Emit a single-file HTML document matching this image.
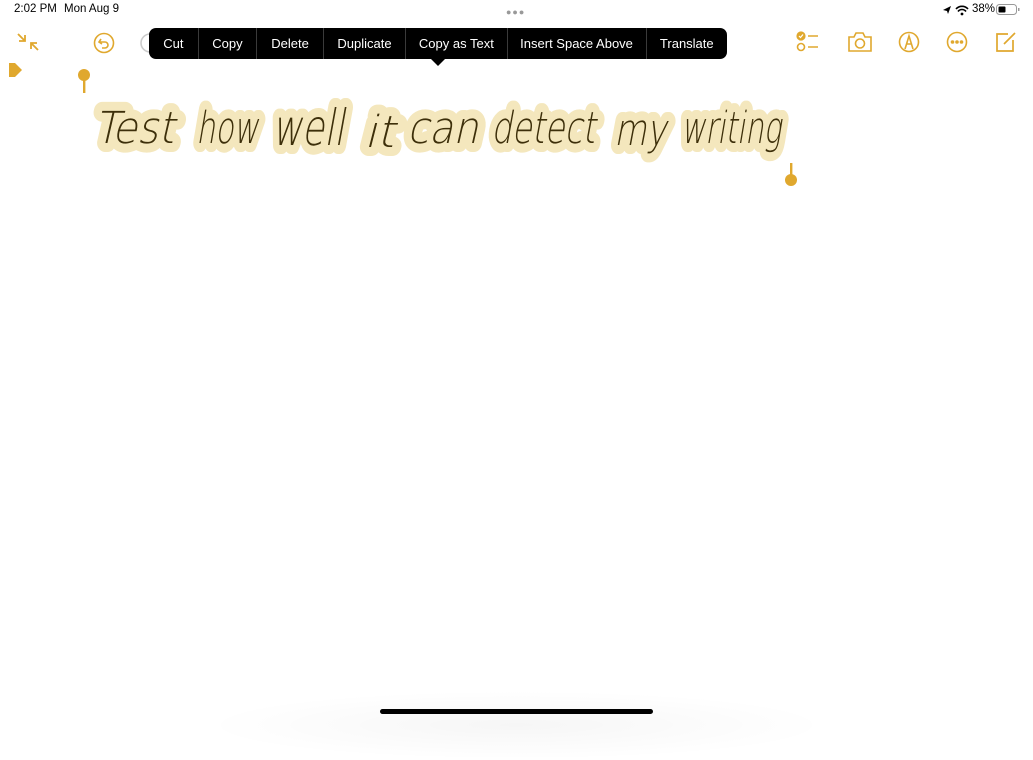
<!DOCTYPE html>
<html><head><meta charset="utf-8"><style>
html,body{margin:0;padding:0}
body{width:1033px;height:721px;position:relative;background:#fff;overflow:hidden;font-family:"Liberation Sans",sans-serif}
.sb{position:absolute;top:3px;font-size:11.5px;color:#000}
.menu{position:absolute;left:149px;top:28px;width:578px;height:31px;background:#000;border-radius:7px;display:flex;color:#fff;font-size:13px}
.menu div{display:flex;align-items:center;justify-content:center;border-left:1px solid #3a3a3a}
.menu div:first-child{border-left:none}
.arrow{position:absolute;left:430px;top:58px;width:0;height:0;border-left:8px solid transparent;border-right:8px solid transparent;border-top:8px solid #000}
svg{position:absolute}
</style></head><body>
<div class="sb" style="left:14px">2:02 PM</div>
<div class="sb" style="left:64px">Mon Aug 9</div>
<div style="position:absolute;left:506px;top:7px;font-size:9px;color:#999;letter-spacing:1px">●●●</div>
<div class="sb" style="left:972px">38%</div>
<svg style="left:941px;top:4px" width="30" height="12"><path d="M2 6 L10 2 L7 10 L6 7Z" fill="#000"/><path d="M15 5 a8 8 0 0 1 12 0 M17 7.5 a5 5 0 0 1 8 0" stroke="#000" stroke-width="1.6" fill="none"/><circle cx="21" cy="10" r="1.4"/></svg>
<svg style="left:996px;top:3px" width="26" height="13"><rect x="0.5" y="1.5" width="20" height="10" rx="3" fill="none" stroke="#999"/><rect x="2.5" y="3.5" width="7" height="6" rx="1" fill="#000"/><rect x="22" y="5" width="1.5" height="3" fill="#999"/></svg>

<svg style="left:14px;top:30px" width="28" height="24" stroke="#e0a82e" stroke-width="1.8" fill="none"><path d="M4 4 L11 11 M11 5 V11 H5 M24 20 L17 13 M17 19 V13 H23"/></svg>
<svg style="left:92px;top:31px" width="24" height="24" stroke="#e0a82e" stroke-width="1.6" fill="none"><circle cx="12" cy="12" r="9.5"/><path d="M9 8 L7 11 L10 13 M7 11 H13 a3 3 0 0 1 0 6 H10"/></svg>
<svg style="left:140px;top:31px" width="12" height="24"><path d="M10 3 a9 9 0 0 0 0 18" stroke="#ccc" stroke-width="1.6" fill="none"/></svg>
<div class="menu">
<div style="width:49px">Cut</div><div style="width:58px">Copy</div><div style="width:66px">Delete</div><div style="width:82px">Duplicate</div><div style="width:101px">Copy as Text</div><div style="width:139px">Insert Space Above</div><div style="width:81px">Translate</div>
</div>
<div class="arrow"></div>

<svg style="left:796px;top:31px" width="26" height="22" stroke="#e0a82e" stroke-width="1.6" fill="none"><circle cx="5" cy="5" r="3.8" fill="#e0a82e"/><path d="M3 5 L4.5 6.5 L7 3.5" stroke="#fff" stroke-width="1.2"/><circle cx="5" cy="16" r="3.5"/><path d="M12 5 H22 M12 16 H22"/></svg>
<svg style="left:847px;top:31px" width="26" height="22" stroke="#e0a82e" stroke-width="1.6" fill="none"><path d="M2 6 H7 L9 2 H16 L18 6 H24 V20 H2Z"/><circle cx="13" cy="12.5" r="4.5"/></svg>
<svg style="left:897px;top:30px" width="24" height="24" stroke="#e0a82e" stroke-width="1.6" fill="none"><circle cx="12" cy="12" r="9.5"/><path d="M8 19 L12 6 L16 19 M10 14 H14"/></svg>
<svg style="left:945px;top:30px" width="24" height="24" stroke="#e0a82e" stroke-width="1.6" fill="none"><circle cx="12" cy="12" r="9.5"/><circle cx="7.5" cy="12" r="1" fill="#e0a82e"/><circle cx="12" cy="12" r="1" fill="#e0a82e"/><circle cx="16.5" cy="12" r="1" fill="#e0a82e"/></svg>
<svg style="left:994px;top:30px" width="24" height="24" stroke="#e0a82e" stroke-width="1.7" fill="none"><path d="M14 4 H3 V21 H19 V10"/><path d="M10 14 L21 3"/></svg>

<svg style="left:8px;top:62px" width="16" height="16"><path d="M1 1 H7 L14 8 L7 15 H1Z" fill="#e0a82e"/></svg>
<svg style="left:76px;top:68px" width="16" height="26"><circle cx="8" cy="7" r="6" fill="#e0a82e"/><rect x="7" y="10" width="2.4" height="15" fill="#e0a82e"/></svg>
<svg style="left:783px;top:162px" width="16" height="26"><rect x="7" y="1" width="2.4" height="16" fill="#e0a82e"/><circle cx="8" cy="18" r="6" fill="#e0a82e"/></svg>

<svg style="left:0;top:0" width="1033" height="200" font-family="DejaVu Sans Light,Liberation Sans,sans-serif" font-size="44" fill="#3d2f0a" stroke="#f4e7bd" stroke-width="18" stroke-linejoin="round" paint-order="stroke" font-style="italic">
<text x="94" y="143" textLength="80" lengthAdjust="spacingAndGlyphs">Test</text>
<text x="196" y="143" textLength="62" lengthAdjust="spacingAndGlyphs">how</text>
<text x="272" y="145" textLength="72" lengthAdjust="spacingAndGlyphs" font-size="50">well</text>
<text x="364" y="147" textLength="30" lengthAdjust="spacingAndGlyphs">it</text>
<text x="407" y="143" textLength="71" lengthAdjust="spacingAndGlyphs">can</text>
<text x="491" y="143" textLength="104" lengthAdjust="spacingAndGlyphs">detect</text>
<text x="614" y="145" textLength="52" lengthAdjust="spacingAndGlyphs">my</text>
<text x="681" y="143" textLength="100" lengthAdjust="spacingAndGlyphs">writing</text>
</svg>

<div style="position:absolute;left:200px;top:690px;width:633px;height:70px;border-radius:50%;background:radial-gradient(ellipse at center,rgba(0,0,0,0.035),rgba(0,0,0,0) 70%)"></div>
<div style="position:absolute;left:380px;top:709px;width:273px;height:5px;border-radius:3px;background:#000"></div>
</body></html>
